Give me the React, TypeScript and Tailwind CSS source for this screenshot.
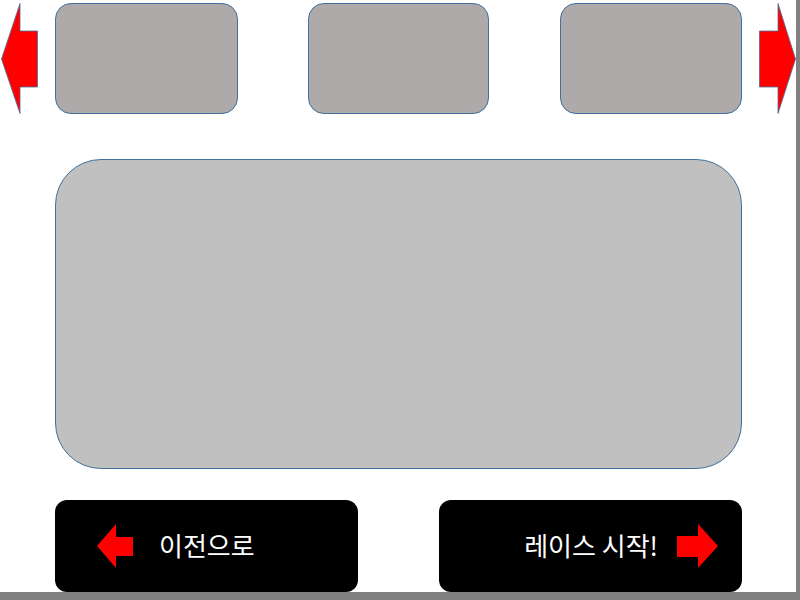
import React from 'react';

// Red block arrow used on the carousel edges and buttons
const BlockArrow: React.FC<{ w: number; h: number; points: string; outline?: boolean }> = ({ w, h, points, outline }) => (
  <svg width={w} height={h} viewBox={`0 0 ${w} ${h}`} className="shrink-0 block">
    <polygon points={points} fill="#ff0000" stroke={outline ? '#41719c' : 'none'} strokeWidth={outline ? 0.8 : 0} />
  </svg>
);

const App: React.FC = () => {
  return (
    <div className="w-[800px] h-[600px] flex flex-col bg-white overflow-hidden" style={{ fontFamily: '"Noto Sans CJK KR", "Noto Sans", sans-serif' }}>
      <div className="flex h-[592px]">
        <div className="w-[796px] h-full flex flex-col">
          {/* Top carousel row */}
          <div className="flex items-start pt-[3px] h-[114px]">
            <div className="ml-[1px]">
              <BlockArrow w={37} h={111} outline points="0.5,56 19,0.5 19,28 36.5,28 36.5,84 19,84 19,110.5" />
            </div>
            <div className="ml-[17px] w-[183px] h-[111px] rounded-[16px] bg-[#aeaaaa] border border-[#41719c]"></div>
            <div className="ml-[70px] w-[181px] h-[111px] rounded-[16px] bg-[#aeaaaa] border border-[#41719c]"></div>
            <div className="ml-[71px] w-[182px] h-[111px] rounded-[16px] bg-[#aeaaaa] border border-[#41719c]"></div>
            <div className="ml-[17px]">
              <BlockArrow w={37} h={111} outline points="0.5,28 19,28 19,0.5 36.5,56 19,110.5 19,84 0.5,84" />
            </div>
          </div>

          {/* Main preview panel */}
          <div className="ml-[55px] mt-[45px] w-[687px] h-[311px] rounded-[46px] bg-[#c0c0c0] border border-[#41719c]"></div>

          {/* Bottom buttons */}
          <div className="flex mt-[31px] pl-[55px] gap-[81px]">
            <button className="w-[303px] h-[92px] rounded-[12px] bg-black flex items-center pl-[42px] text-white text-[26px]">
              <BlockArrow w={36} h={44} points="0,22 19,0 19,13 36,13 36,32 19,32 19,44" />
              <span className="ml-[26px] leading-none pb-[3px]">이전으로</span>
            </button>
            <button className="w-[303px] h-[92px] rounded-[12px] bg-black flex items-center justify-end pr-[24px] text-white text-[26px]">
              <span className="mr-[19px] leading-none pb-[3px]">레이스 시작!</span>
              <BlockArrow w={41} h={44} points="0,12 21,12 21,0 41,22 21,44 21,33 0,33" />
            </button>
          </div>
        </div>
        <div className="w-[4px] h-full bg-[#808080]"></div>
      </div>
      <div className="h-[8px] bg-[#808080]"></div>
    </div>
  );
};

export default App;
